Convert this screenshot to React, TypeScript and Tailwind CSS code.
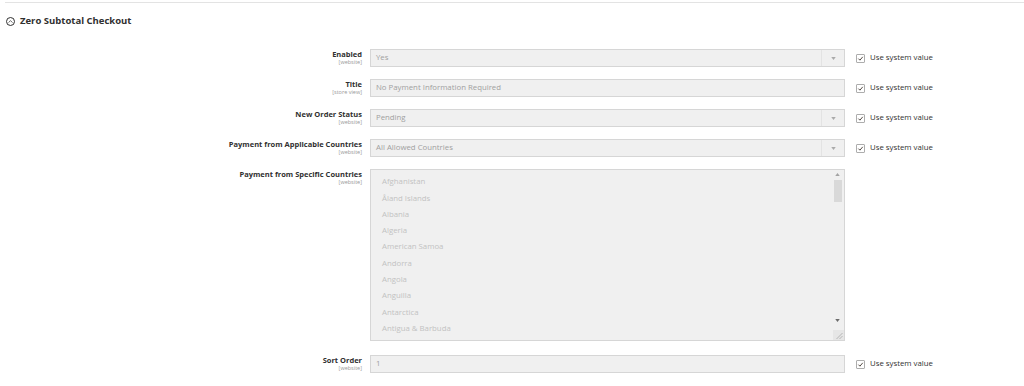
import { ChevronUp } from 'lucide-react';

const countries = [
  'Afghanistan',
  'Åland Islands',
  'Albania',
  'Algeria',
  'American Samoa',
  'Andorra',
  'Angola',
  'Anguilla',
  'Antarctica',
  'Antigua & Barbuda',
];

function Label({ title, scope }: { title: string; scope: string }) {
  return (
    <div className="w-[362px] shrink-0 text-right leading-none">
      <div className="text-[7.5px] font-bold text-[#303030] leading-[9px]">{title}</div>
      <div className="text-[5.5px] text-[#999] leading-[7px]">[{scope}]</div>
    </div>
  );
}

function SystemValue() {
  return (
    <label className="ml-[11px] flex items-center gap-[5px] text-[7.8px] text-[#303030]">
      <span className="flex h-[9px] w-[9px] items-center justify-center rounded-[1px] border border-[#adadad] bg-white">
        <svg viewBox="0 0 10 10" className="h-[7px] w-[7px]">
          <path d="M2 5.2 L4.2 7.4 L8.2 2.6" fill="none" stroke="#514943" strokeWidth="1.4" />
        </svg>
      </span>
      Use system value
    </label>
  );
}

function Arrow() {
  return (
    <div className="flex h-full w-[23px] items-center justify-center border-l border-[#e3e3e3]">
      <svg viewBox="0 0 6 4" className="h-[3px] w-[5px]">
        <path d="M0 0 L6 0 L3 4 Z" fill="#aaa" />
      </svg>
    </div>
  );
}

function Field({ value, select }: { value: string; select?: boolean }) {
  return (
    <div className="ml-[8px] flex h-[18px] w-[475px] items-center border border-[#d6d6d6] bg-[#f0f0f0]">
      <span className="flex-1 pl-[5px] text-[7.8px] text-[#a0a0a0]">{value}</span>
      {select && <Arrow />}
    </div>
  );
}

function Row({ title, scope, value, select }: { title: string; scope: string; value: string; select?: boolean }) {
  return (
    <div className="flex items-start">
      <div className="pt-[1px]">
        <Label title={title} scope={scope} />
      </div>
      <Field value={value} select={select} />
      <div className="flex h-[18px] items-center">
        <SystemValue />
      </div>
    </div>
  );
}

export default function App() {
  return (
    <div
      className="h-[386px] w-[1024px] overflow-hidden bg-white"
      style={{ fontFamily: '"Open Sans", sans-serif' }}
    >
      <div className="ml-[5px] mt-[2px] border-t border-[#e3e3e3]" />

      {/* Section heading */}
      <div className="ml-[6px] mt-[11px] flex items-center gap-[5px]">
        <span className="flex h-[9px] w-[9px] items-center justify-center rounded-full border border-[#303030]">
          <ChevronUp className="h-[7px] w-[7px] text-[#303030]" strokeWidth={2.5} />
        </span>
        <span className="text-[9.5px] font-bold text-[#303030]">Zero Subtotal Checkout</span>
      </div>

      <div className="mt-[21px] flex flex-col gap-[12px]">
        <Row title="Enabled" scope="website" value="Yes" select />
        <Row title="Title" scope="store view" value="No Payment Information Required" />
        <Row title="New Order Status" scope="website" value="Pending" select />
        <Row title="Payment from Applicable Countries" scope="website" value="All Allowed Countries" select />

        {/* Multiselect */}
        <div className="flex items-start">
          <div className="pt-[1px]">
            <Label title="Payment from Specific Countries" scope="website" />
          </div>
          <div className="relative ml-[8px] flex h-[172px] w-[475px] border border-[#d6d6d6] bg-[#f0f0f0]">
            <div className="flex-1 pl-[11px] pt-[3px]">
              {countries.map((c) => (
                <div key={c} className="h-[16.3px] text-[7.8px] leading-[16.3px] text-[#c2c2c2]">
                  {c}
                </div>
              ))}
            </div>
            <div className="mr-[1px] flex w-[11px] flex-col items-center pt-[3px]">
              <svg viewBox="0 0 6 4" className="h-[3px] w-[5px]">
                <path d="M3 0 L6 4 L0 4 Z" fill="#a3a3a3" />
              </svg>
              <div className="mt-[4px] h-[22px] w-[8px] bg-[#d9d9d9]" />
              <div className="flex-1" />
              <svg viewBox="0 0 6 4" className="mb-[18px] h-[3px] w-[5px]">
                <path d="M0 0 L6 0 L3 4 Z" fill="#6b6b6b" />
              </svg>
            </div>
            <div className="absolute bottom-0 right-0 h-[10px] w-[11px] bg-[#e6e6e6]">
              <svg viewBox="0 0 10 10" className="h-full w-full">
                <path d="M3 9 L9 3 M6 9 L9 6" stroke="#a8a8a8" strokeWidth="0.8" />
              </svg>
            </div>
          </div>
        </div>

        <div className="mt-[2px]">
          <Row title="Sort Order" scope="website" value="1" />
        </div>
      </div>
    </div>
  );
}
